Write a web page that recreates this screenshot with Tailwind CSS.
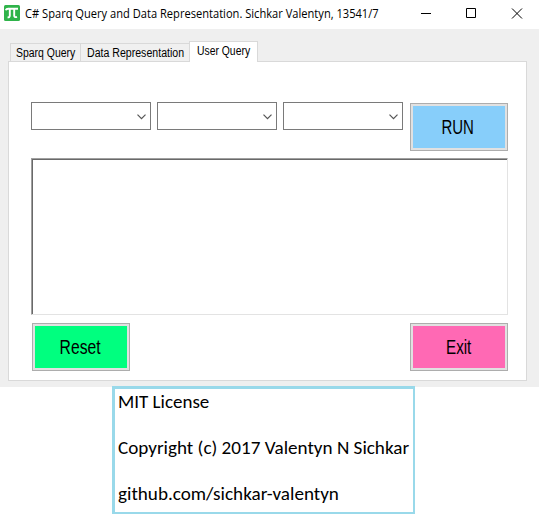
<!DOCTYPE html>
<html lang="en">
<head>
<meta charset="utf-8">
<title>C# Sparq Query and Data Representation</title>
<script src="https://cdn.jsdelivr.net/npm/@tailwindcss/browser@4"></script>
</head>
<body class="w-[539px] h-[514px] overflow-hidden bg-white text-black font-['Liberation_Sans',sans-serif]">
<main class="h-[387px] bg-[#efefef]">
  <header class="h-[29px] bg-white flex items-start">
    <svg class="ml-1 mt-[5px] w-4 h-4 shrink-0" viewBox="0 0 16 16"><rect width="16" height="16" rx="1.5" fill="#2fb34a"/><path d="M1.8 5.3C2.2 3.9 3 3.7 4.2 3.7H14M5.8 4V10.5Q5.8 12.6 3.6 12.3M10.2 4V10.5Q10.2 12.8 13 11.8" fill="none" stroke="#fff" stroke-width="1.9"/></svg>
    <h1 class="ml-[5px] mt-[6px] w-[380px] shrink-0 h-4 leading-4 text-[12px] whitespace-nowrap font-['Open_Sans',sans-serif]"><span class="inline-block origin-left scale-x-[0.926]">C# Sparq Query and Data Representation. Sichkar Valentyn, 13541/7</span></h1>
    <svg class="ml-[16px] mt-2 w-[102px] h-[11px] shrink-0" viewBox="0 0 102 11" fill="none" stroke="#000"><path d="M0 5.5H10M45.5 .5H54.5V9.5H45.5ZM91 .5L101 10.5M101 .5L91 10.5"/></svg>
  </header>
  <nav class="h-[32px] pl-[10px] flex items-end text-[12px] leading-[14px] whitespace-nowrap">
    <div class="w-[70px] h-[18px] border-t border-l border-[#d9d9d9] bg-[#f0f0f0] pl-[5px] pt-[2px]"><span class="inline-block origin-left scale-x-[0.87]">Sparq Query</span></div>
    <div class="w-[109px] h-[18px] border-t border-l border-[#d9d9d9] bg-[#f0f0f0] pl-[6px] pt-[2px]"><span class="inline-block origin-left scale-x-[0.882]">Data Representation</span></div>
    <div class="relative w-[69px] h-[21px] -mb-px border-t border-x border-[#d9d9d9] bg-white pl-[7px] pt-[2px]"><span class="inline-block origin-left scale-x-[0.865]">User Query</span></div>
  </nav>
  <section class="ml-2 w-[519px] h-[320px] border border-[#d9d9d9] bg-white pl-[22px] pt-[40px]">
    <div class="flex h-14">
      <div class="flex gap-[6px]">
        <div class="w-[120px] h-[28px] border border-[#7a7a7a] flex items-center justify-end pr-1 pt-px"><svg class="w-[9px] h-[6px]" viewBox="0 0 9 6"><path d="M.5 .7L4.5 4.7L8.5 .7" fill="none" stroke="#555" stroke-width="1.2"/></svg></div>
        <div class="w-[120px] h-[28px] border border-[#7a7a7a] flex items-center justify-end pr-1 pt-px"><svg class="w-[9px] h-[6px]" viewBox="0 0 9 6"><path d="M.5 .7L4.5 4.7L8.5 .7" fill="none" stroke="#555" stroke-width="1.2"/></svg></div>
        <div class="w-[120px] h-[28px] border border-[#7a7a7a] flex items-center justify-end pr-1 pt-px"><svg class="w-[9px] h-[6px]" viewBox="0 0 9 6"><path d="M.5 .7L4.5 4.7L8.5 .7" fill="none" stroke="#555" stroke-width="1.2"/></svg></div>
      </div>
      <button class="ml-[7px] mt-px w-[98px] h-12 border border-[#adadad] bg-[#e1e1e1] p-[2px]"><span class="flex w-full h-full items-center justify-center bg-[#87cefa] text-[20px] pr-[2px]"><span class="inline-block scale-x-[0.75]">RUN</span></span></button>
    </div>
    <div class="w-[477px] h-[157px] border-t border-l border-t-[#a0a0a0] border-l-[#a0a0a0] border-r border-b border-r-[#e3e3e3] border-b-[#e3e3e3]"><div class="w-full h-full border-t border-l border-[#696969]"></div></div>
    <div class="mt-2 ml-px w-[476px] flex justify-between">
      <button class="w-[98px] h-12 border border-[#adadad] bg-[#e1e1e1] p-[2px]"><span class="flex w-full h-full items-center justify-center bg-[#00ff7f] text-[20px] pr-px"><span class="inline-block scale-x-[0.785]">Reset</span></span></button>
      <button class="w-[98px] h-12 border border-[#adadad] bg-[#e1e1e1] p-[2px]"><span class="flex w-full h-full items-center justify-center bg-[#ff69b4] text-[20px] pr-px"><span class="inline-block scale-x-[0.76]">Exit</span></span></button>
    </div>
  </section>
</main>
<footer class="relative -mt-px ml-[112px] w-[303px] h-[128px] border-t-[3px] border-l-[3px] border-r-2 border-b-2 border-[#99d9ea] bg-white pl-[3px] pt-px text-[19px] leading-[23px] whitespace-nowrap font-[Carlito,Lato,sans-serif]">
  <p class="mb-[23px]"><span class="inline-block origin-left">MIT License</span></p>
  <p class="mb-[23px]"><span class="inline-block origin-left scale-x-[1.007]">Copyright (c) 2017 Valentyn N Sichkar</span></p>
  <p><span class="inline-block origin-left scale-x-[1.007]">github.com/sichkar-valentyn</span></p>
</footer>
</body>
</html>
